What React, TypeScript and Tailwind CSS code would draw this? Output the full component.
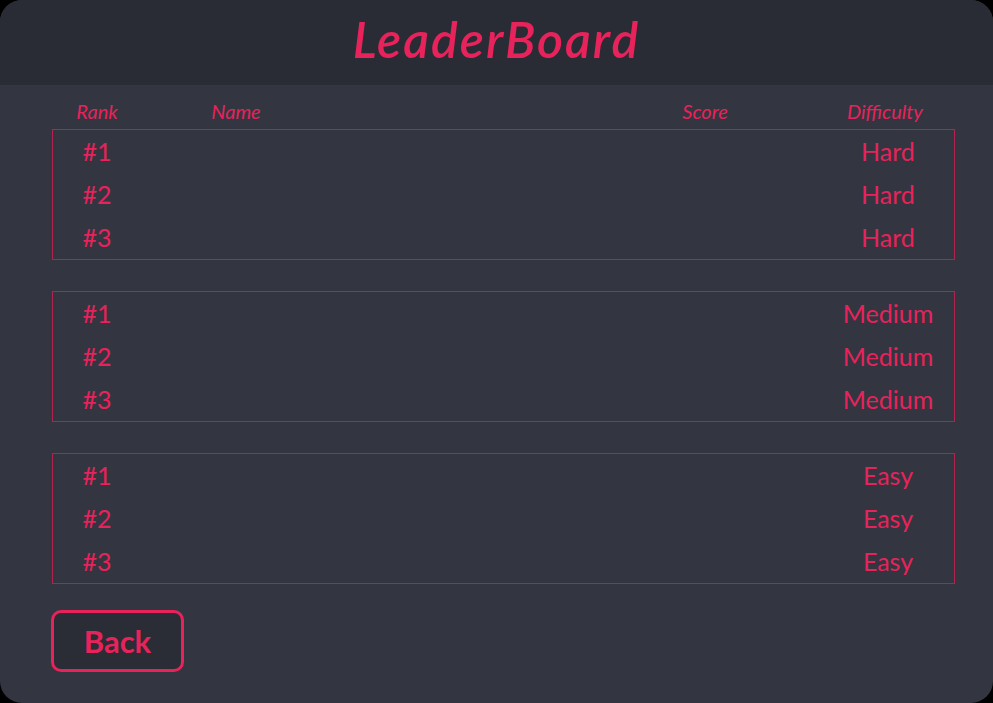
import React from "react";

const RED = "text-[#e8225a]";

const groups: { label: string }[] = [
  { label: "Hard" },
  { label: "Medium" },
  { label: "Easy" },
];

const cols = "grid grid-cols-[88px_190px_1fr_110px_62px_132px] items-center";

const App: React.FC = () => {
  return (
    <div className="w-[993px] h-[703px] bg-black font-['Lato','Noto_Sans',sans-serif]">
      <div className="w-full h-full rounded-[22px] overflow-hidden bg-[#333641] flex flex-col">
        {/* title bar */}
        <div className="h-[85px] bg-[#292c35] flex items-center justify-center shrink-0">
          <h1 className={`${RED} italic font-semibold text-[50px] leading-none tracking-[2px] -mt-[8px]`}>
            LeaderBoard
          </h1>
        </div>

        <div className="pl-[52px] pr-[38px] pt-[11px] flex flex-col">
          {/* column headings */}
          <div className={`${cols} ${RED} italic text-[20px] h-[28px] px-px`}>
            <span className="text-center">Rank</span>
            <span className="text-center">Name</span>
            <span />
            <span className="text-center">Score</span>
            <span />
            <span className="text-center pr-[6px]">Difficulty</span>
          </div>

          <div className="flex flex-col gap-[31px] mt-[5px]">
            {groups.map((g) => (
              <div key={g.label} className="border border-[#b0244f]">
                {[1, 2, 3].map((n) => (
                  <div key={n} className={`${cols} ${RED} h-[43px] text-[25px]`}>
                    <span className="text-center">#{n}</span>
                    <span />
                    <span />
                    <span />
                    <span />
                    <span className="text-center">{g.label}</span>
                  </div>
                ))}
              </div>
            ))}
          </div>

          <div className="mt-[26px]">
            <button className={`w-[133px] h-[62px] -ml-px rounded-[10px] border-[3px] border-[#e8225a] bg-[#2a2d36] ${RED} font-bold text-[31px] leading-none`}>
              Back
            </button>
          </div>
        </div>
      </div>
    </div>
  );
};

export default App;
